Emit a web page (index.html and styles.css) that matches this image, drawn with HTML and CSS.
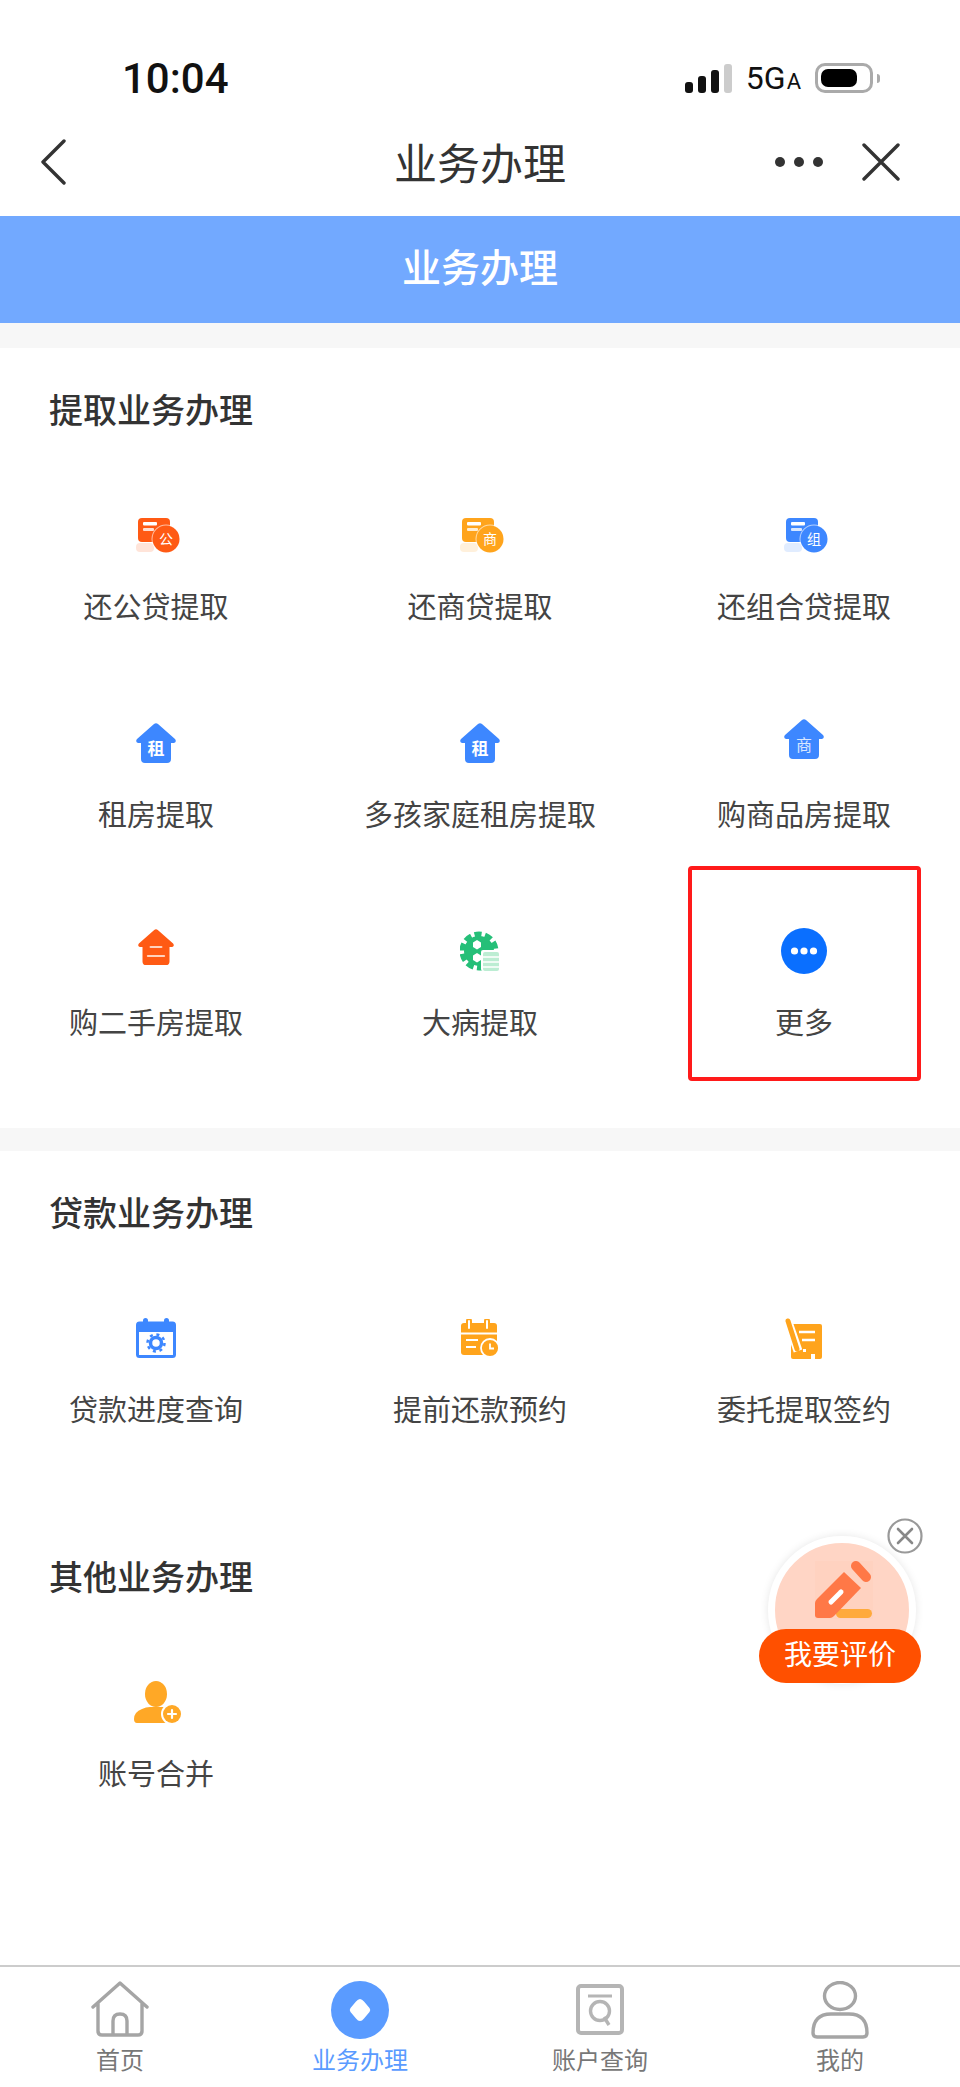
FILE: index.html
```html
<!DOCTYPE html>
<html lang="zh-CN">
<head>
    <meta charset="UTF-8">
    <meta name="viewport" content="width=device-width, initial-scale=1.0">
    <title>业务办理</title>
    <link rel="stylesheet" href="styles.css">
</head>
<body>
<div class="page">
    <div class="status-bar">
        <span class="time">10:04</span>
        <div class="status-right">
            <div class="signal"><i class="s1"></i><i class="s2"></i><i class="s3"></i><i class="s4"></i></div>
            <span class="net">5G<small>A</small></span>
            <div class="battery"><i></i></div>
            <i class="battery-nub"></i>
        </div>
    </div>

    <div class="nav-bar">
        <svg class="back" width="26" height="46" viewBox="0 0 26 46"><path d="M24 2 L3 23 L24 44" fill="none" stroke="#333" stroke-width="3.4" stroke-linecap="round" stroke-linejoin="round"/></svg>
        <div class="nav-title">业务办理</div>
        <div class="nav-actions">
            <div class="dots"><i></i><i></i><i></i></div>
            <svg width="38" height="38" viewBox="0 0 38 38"><path d="M2 2 L36 36 M36 2 L2 36" fill="none" stroke="#333" stroke-width="3.4" stroke-linecap="round"/></svg>
        </div>
    </div>

    <div class="banner">业务办理</div>
    <div class="gap"></div>

    <div class="main">
        <section class="section">
            <h2>提取业务办理</h2>
            <div class="grid">
                <div class="cell">
                    <div class="icon">
                        <svg width="44" height="36" viewBox="0 0 44 36" class="c-red ic-right"><use href="#loan"/><text x="30" y="27" class="ic-txt" font-size="14">公</text></svg>
                    </div>
                    <div class="label">还公贷提取</div>
                </div>
                <div class="cell">
                    <div class="icon">
                        <svg width="44" height="36" viewBox="0 0 44 36" class="c-orange ic-right"><use href="#loan"/><text x="30" y="27" class="ic-txt" font-size="14">商</text></svg>
                    </div>
                    <div class="label">还商贷提取</div>
                </div>
                <div class="cell">
                    <div class="icon">
                        <svg width="44" height="36" viewBox="0 0 44 36" class="c-blue ic-right"><use href="#loan"/><text x="30" y="27" class="ic-txt" font-size="14">组</text></svg>
                    </div>
                    <div class="label">还组合贷提取</div>
                </div>
                <div class="cell">
                    <div class="icon">
                        <svg width="40" height="40" viewBox="0 0 40 40" class="c-blue"><use href="#house"/><text x="20" y="32" class="ic-txt bold" font-size="17">租</text></svg>
                    </div>
                    <div class="label">租房提取</div>
                </div>
                <div class="cell">
                    <div class="icon">
                        <svg width="40" height="40" viewBox="0 0 40 40" class="c-blue"><use href="#house"/><text x="20" y="32" class="ic-txt bold" font-size="17">租</text></svg>
                    </div>
                    <div class="label">多孩家庭租房提取</div>
                </div>
                <div class="cell">
                    <div class="icon">
                        <svg width="40" height="40" viewBox="0 0 40 40" class="c-blue ic-up"><use href="#house"/><text x="20" y="32" class="ic-txt" font-size="16" opacity="0.8">商</text></svg>
                    </div>
                    <div class="label">购商品房提取</div>
                </div>
                <div class="cell">
                    <div class="icon">
                        <svg width="36" height="38" viewBox="0 0 40 42" class="c-red ic-up"><use href="#house"/><path d="M14 21 H26 M11 31 H29" stroke="#ffd2bd" stroke-width="2.4" stroke-linecap="round"/></svg>
                    </div>
                    <div class="label">购二手房提取</div>
                </div>
                <div class="cell">
                    <div class="icon">
                        <svg width="40" height="40" viewBox="0 0 40 40">
                            <circle cx="19" cy="20" r="15" fill="#25bf78"/>
                            <circle cx="19" cy="20" r="16.500" fill="none" stroke="#25bf78" stroke-width="6" stroke-dasharray="7 3.400"/>
                            <path d="M17 9 L21 11.500 V16 L17 18.500 L13 16 V11.500 Z" fill="#fff"/>
                            <path d="M17 22 L21 24.500 V29 L17 31.500 L13 29 V24.500 Z" fill="#fff"/>
                            <rect x="21" y="19" width="19" height="21" rx="2" fill="#fff"/>
                            <rect x="23" y="21" width="16" height="19" rx="2" fill="#bcedd3"/>
                            <path d="M23 26 H39 M23 31 H39 M23 36 H39" stroke="#fff" stroke-width="1.4"/>
                        </svg>
                    </div>
                    <div class="label">大病提取</div>
                </div>
                <div class="cell marked">
                    <div class="icon">
                        <svg width="46" height="46" viewBox="0 0 46 46"><circle cx="23" cy="23" r="23" fill="#0a6fff"/><circle cx="13.5" cy="23" r="3.6" fill="#fff"/><circle cx="23" cy="23" r="3.6" fill="#fff"/><circle cx="32.5" cy="23" r="3.6" fill="#fff"/></svg>
                    </div>
                    <div class="label">更多</div>
                </div>
            </div>
        </section>

        <div class="gap gap-thin"></div>

        <section class="section">
            <h2>贷款业务办理</h2>
            <div class="grid">
                <div class="cell">
                    <div class="icon">
                        <svg width="40" height="40" viewBox="0 0 40 40">
                            <rect x="1.5" y="5" width="37" height="33.500" rx="2" fill="#fff" stroke="#3d87ff" stroke-width="3"/>
                            <rect x="1" y="4" width="38" height="10" rx="2" fill="#3d87ff"/>
                            <rect x="7" y="0" width="5" height="8" rx="2.500" fill="#3d87ff"/>
                            <rect x="28" y="0" width="5" height="8" rx="2.500" fill="#3d87ff"/>
                            <circle cx="20" cy="25" r="5.500" fill="none" stroke="#3d87ff" stroke-width="3.500"/>
                            <circle cx="20" cy="25" r="8.500" fill="none" stroke="#3d87ff" stroke-width="2.500" stroke-dasharray="3 3.700"/>
                        </svg>
                    </div>
                    <div class="label">贷款进度查询</div>
                </div>
                <div class="cell">
                    <div class="icon">
                        <svg width="38" height="38" viewBox="0 0 38 38">
                            <rect x="0" y="4" width="36" height="32" rx="3" fill="#ffa41c"/>
                            <path d="M8 2 V10 M26 2 V10" stroke="#ffa41c" stroke-width="6" stroke-linecap="round"/>
                            <path d="M8 2 V9 M26 2 V9" stroke="#fff" stroke-width="2" stroke-linecap="round"/>
                            <path d="M0 14.500 H36 M5 21 H17 M5 28 H15" stroke="#fff" stroke-width="2.200"/>
                            <circle cx="29" cy="29" r="9" fill="#ffa41c" stroke="#fff" stroke-width="1.800"/>
                            <path d="M29 24.500 V29.500 H33" fill="none" stroke="#fff" stroke-width="1.800"/>
                        </svg>
                    </div>
                    <div class="label">提前还款预约</div>
                </div>
                <div class="cell">
                    <div class="icon">
                        <svg width="38" height="41" viewBox="0 0 38 41">
                            <rect x="6" y="6" width="31" height="35" rx="2" fill="#ffa41c"/>
                            <path d="M3 4 L13 33" stroke="#fff" stroke-width="9"/>
                            <path d="M3 3 L12 31" stroke="#ffa41c" stroke-width="5" stroke-linecap="round"/>
                            <path d="M14 14 H30 M17 22 H30" stroke="#fff" stroke-width="2.600"/>
                            <rect x="18" y="31" width="3" height="3" fill="#fff"/>
                            <rect x="26" y="36" width="4" height="5" fill="#fff"/>
                        </svg>
                    </div>
                    <div class="label">委托提取签约</div>
                </div>
            </div>
            <h2>其他业务办理</h2>
            <div class="grid">
                <div class="cell">
                    <div class="icon">
                        <svg width="48" height="42" viewBox="0 0 48 42" class="ic-right">
                            <ellipse cx="22" cy="13" rx="11" ry="13" fill="#ffa826"/>
                            <path d="M0 38 Q0 31 8 28 Q12 26 16 26 H28 Q34 26 36 28 V42 H3 Q0 42 0 38 Z" fill="#ffa826"/>
                            <circle cx="38" cy="33" r="11" fill="#fff"/>
                            <circle cx="38" cy="33" r="9" fill="#ffa826"/>
                            <path d="M38 29 V37 M34 33 H42" stroke="#fff" stroke-width="2.200" stroke-linecap="round"/>
                        </svg>
                    </div>
                    <div class="label">账号合并</div>
                </div>
            </div>
        </section>
    </div>

    <div class="tab-bar">
        <div class="tab">
            <svg width="58" height="58" viewBox="0 0 58 58" class="tab-icon">
                <path d="M2 26 L29 2 L56 26 M7 22 V50 Q7 54 11 54 H47 Q51 54 51 50 V22 M22 54 V40 Q22 33 29 33 Q36 33 36 40 V54" fill="none" stroke="#a5a5a5" stroke-width="3.400" stroke-linecap="round" stroke-linejoin="round"/>
            </svg>
            <span>首页</span>
        </div>
        <div class="tab active">
            <svg width="58" height="58" viewBox="0 0 58 58" class="tab-icon">
                <circle cx="29" cy="29" r="29" fill="#5a9bff"/>
                <path d="M29 18 Q31 18 33 20.500 L38.500 27 Q40 29 38.500 31 L33 37.500 Q31 40 29 40 Q27 40 25 37.500 L19.500 31 Q18 29 19.500 27 L25 20.500 Q27 18 29 18 Z" fill="#fff"/>
            </svg>
            <span>业务办理</span>
        </div>
        <div class="tab">
            <svg width="58" height="58" viewBox="0 0 58 58" class="tab-icon">
                <rect x="7" y="5" width="44" height="47" rx="3" fill="none" stroke="#b5b5b5" stroke-width="4"/>
                <path d="M17 15 H41" stroke="#b5b5b5" stroke-width="3"/>
                <circle cx="29" cy="30" r="9.500" fill="none" stroke="#b5b5b5" stroke-width="3.400"/>
                <path d="M33 36 L38 44" stroke="#b5b5b5" stroke-width="3.400"/>
            </svg>
            <span>账户查询</span>
        </div>
        <div class="tab">
            <svg width="58" height="58" viewBox="0 0 58 58" class="tab-icon">
                <ellipse cx="29" cy="15" rx="15.500" ry="13.500" fill="none" stroke="#a5a5a5" stroke-width="3.400"/>
                <path d="M2 52 Q2 33 20 33 H38 Q56 33 56 52 Q56 56 52 56 H6 Q2 56 2 52 Z" fill="none" stroke="#a5a5a5" stroke-width="3.400"/>
            </svg>
            <span>我的</span>
        </div>
    </div>

    <!-- 悬浮评价按钮 -->
    <div class="rate-float">
        <div class="rate-circle">
            <div class="rate-pencil">
                <svg width="58" height="58" viewBox="0 0 58 58">
                    <rect x="21" y="48" width="36" height="9" rx="4.500" fill="#ffaa3c"/>
                    <path d="M29 11 L46 27 L19 55 Q17 57 15 57 H3 Q0 57 0 54 V42 Q0 40 2 38 Z" fill="#ff7847"/>
                    <path d="M41 5 L51 16" stroke="#ff7847" stroke-width="10" stroke-linecap="round"/>
                    <path d="M16 41 L26 31" stroke="#fff" stroke-width="5" stroke-linecap="round"/>
                </svg>
            </div>
        </div>
        <div class="rate-pill">我要评价</div>
        <div class="rate-close">
            <svg width="36" height="36" viewBox="0 0 36 36"><circle cx="18" cy="18" r="16.500" fill="#fff" stroke="#999" stroke-width="2.200"/><path d="M11 11 L25 25 M25 11 L11 25" stroke="#888" stroke-width="2.600" stroke-linecap="round"/></svg>
        </div>
    </div>
</div>

<svg class="defs" width="0" height="0">
    <symbol id="loan" viewBox="0 0 44 36">
        <rect x="0" y="26" width="18" height="9" rx="4" fill="currentColor" opacity="0.16"/>
        <rect x="2" y="1" width="32" height="24" rx="4" fill="currentColor"/>
        <rect x="7" y="5" width="14" height="3.500" rx="1" fill="#fff"/>
        <rect x="7" y="11" width="11" height="3" rx="1" fill="#fff" opacity="0.8"/>
        <circle cx="30" cy="22" r="14.500" fill="#fff" opacity="0.6"/>
        <circle cx="30" cy="22" r="13.500" fill="currentColor"/>
    </symbol>
    <symbol id="house" viewBox="0 0 40 40">
        <path d="M18 1 Q20 -0.500 22 1 L39 16 Q41 19 38 20 H35 V36 Q35 40 31 40 H9 Q5 40 5 36 V20 H2 Q-1 19 1 16 Z" fill="currentColor"/>
    </symbol>
</svg>
</body>
</html>
```

FILE: styles.css
```css
* {
    box-sizing: border-box;
}
body {
    margin: 0;
    background-color: #fff;
    font-family: "Liberation Sans", "Noto Sans CJK SC", sans-serif;
}
.page {
    position: relative;
    display: flex;
    flex-direction: column;
    width: 960px;
    height: 2087px;
    overflow: hidden;
}
.defs {
    position: absolute;
}

/* 状态栏 */
.status-bar {
    display: flex;
    justify-content: space-between;
    align-items: center;
    height: 108px;
    padding: 48px 80px 0 122px;
}
.time {
    font-family: Roboto, sans-serif;
    font-size: 42px;
    font-weight: 500;
    color: #111;
}
.status-right {
    display: flex;
    align-items: center;
}
.signal {
    display: flex;
    align-items: flex-end;
    gap: 5px;
    height: 29px;
}
.signal i {
    display: block;
    width: 8px;
    border-radius: 3px;
    background-color: #111;
}
.signal .s1 { height: 11px; }
.signal .s2 { height: 17px; }
.signal .s3 { height: 23px; }
.signal .s4 { height: 29px; background-color: #ccc; }
.net {
    margin-left: 14px;
    font-family: Roboto, sans-serif;
    font-size: 32px;
    color: #111;
}
.net small {
    font-size: 22px;
    margin-left: 1px;
}
.battery {
    width: 58px;
    height: 30px;
    margin-left: 14px;
    padding: 3px;
    border: 3px solid #aaa;
    border-radius: 10px;
}
.battery i {
    display: block;
    width: 36px;
    height: 100%;
    border-radius: 7px;
    background-color: #000;
}
.battery-nub {
    width: 3px;
    height: 9px;
    margin-left: 4px;
    border-radius: 0 3px 3px 0;
    background-color: #aaa;
}

/* 导航栏 */
.nav-bar {
    display: grid;
    grid-template-columns: 1fr auto 1fr;
    align-items: center;
    height: 108px;
    padding: 0 60px;
}
.back {
    margin-left: -20px;
}
.nav-title {
    padding-bottom: 3px;
    font-size: 43px;
    color: #333;
}
.nav-actions {
    display: flex;
    justify-content: flex-end;
    align-items: center;
    gap: 39px;
}
.dots {
    display: flex;
    gap: 9px;
}
.dots i {
    width: 10px;
    height: 10px;
    border-radius: 50%;
    background-color: #333;
}

.banner {
    height: 107px;
    line-height: 106px;
    text-align: center;
    font-size: 39px;
    font-weight: 500;
    color: #fff;
    background-color: #72a9ff;
}
.gap {
    height: 25px;
    background-color: #f7f7f7;
}
.gap-thin {
    height: 23px;
}

.main {
    flex: 1;
}
.section {
    padding-bottom: 29px;
}
.section h2 {
    margin: 0;
    height: 127px;
    padding: 43px 0 0 49px;
    line-height: 40px;
    font-size: 34px;
    font-weight: 500;
    color: #333;
}
.grid {
    display: grid;
    grid-template-columns: repeat(3, 240px);
    column-gap: 84px;
    padding: 0 36px;
}
.section .grid + h2 {
    margin-top: 29px;
}
.cell {
    position: relative;
    display: flex;
    flex-direction: column;
    align-items: center;
    height: 208px;
    padding-top: 32px;
}
.icon {
    display: flex;
    justify-content: center;
    align-items: center;
    height: 56px;
}
.label {
    margin-top: 25px;
    line-height: 40px;
    font-size: 29px;
    color: #444;
    white-space: nowrap;
}
/* 截图上的红色标注框 */
.marked::after {
    content: "";
    box-sizing: border-box;
    position: absolute;
    top: -25px;
    left: 4px;
    right: 3px;
    height: 215px;
    border: 4px solid #ff1a1a;
    border-radius: 4px;
}
.c-red { color: #ff5a14; }
.c-orange { color: #ffa41c; }
.c-blue { color: #3d87ff; }
.ic-up {
    margin-bottom: 8px;
}
.ic-right {
    margin-left: 3px;
}
.ic-txt {
    font-family: "Noto Sans CJK SC", sans-serif;
    fill: #fff;
    text-anchor: middle;
}
.ic-txt.bold {
    font-weight: 700;
}

/* 底部标签栏 */
.tab-bar {
    display: grid;
    grid-template-columns: repeat(4, 240px);
    height: 122px;
    padding-top: 14px;
    border-top: 2px solid #ccc;
}
.tab {
    display: flex;
    flex-direction: column;
    align-items: center;
    font-size: 24px;
    line-height: 30px;
    color: #777;
}
.tab-icon {
    margin-bottom: 7px;
}
.tab.active {
    color: #5a9bff;
}

/* 悬浮评价 */
.rate-float {
    position: absolute;
    left: 759px;
    top: 1536px;
    width: 162px;
    height: 147px;
}
.rate-circle {
    width: 148px;
    height: 148px;
    margin-left: 9px;
    border: 7px solid #fff;
    border-radius: 50%;
    background-color: #ffd5c5;
    box-shadow: 0 0 8px rgba(0, 0, 0, 0.1);
}
.rate-pencil {
    width: 58px;
    height: 58px;
    margin: 18px 0 0 40px;
    background-color: #ffd2c0;
}
.rate-pencil svg {
    display: block;
}
.rate-pill {
    position: absolute;
    left: 0;
    bottom: 0;
    width: 162px;
    height: 54px;
    border-radius: 27px;
    line-height: 53px;
    text-align: center;
    font-size: 28px;
    color: #fff;
    background-color: #ff5000;
}
.rate-close {
    position: absolute;
    left: 128px;
    top: -18px;
    width: 36px;
    height: 36px;
}
```
